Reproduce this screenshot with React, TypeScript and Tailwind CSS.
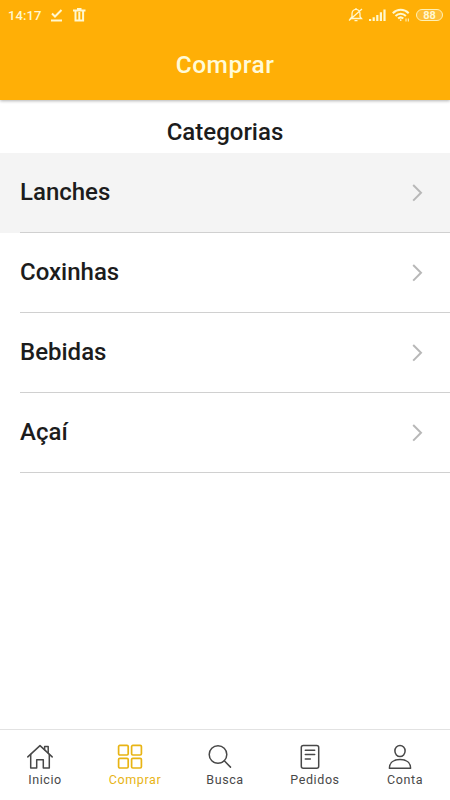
import React, { useState } from 'react';

const CATEGORIES = ['Lanches', 'Coxinhas', 'Bebidas', 'Açaí'];

const HomeIcon: React.FC = () => (
  <svg width="28" height="28" viewBox="0 0 28 28" fill="none" stroke="currentColor" strokeWidth="1.5" strokeLinejoin="round" strokeLinecap="round">
    <path d="M1.8 13.9 14 2.6 26.2 13.9" />
    <path d="M4.7 11.5v13.6h6v-8.4h6.6v8.4h6V11.5" />
    <path d="M18.6 6.7V3.6h3.6v6.3" />
  </svg>
);

const GridIcon: React.FC = () => (
  <svg width="28" height="28" viewBox="0 0 28 28" fill="none" stroke="currentColor" strokeWidth="1.7">
    <rect x="2.6" y="2.4" width="9.6" height="9.6" rx="1.2" />
    <rect x="15.6" y="2.4" width="9.8" height="9.6" rx="1.2" />
    <rect x="2.6" y="15.4" width="9.6" height="9.6" rx="1.2" />
    <rect x="15.6" y="15.4" width="9.8" height="9.6" rx="1.2" />
  </svg>
);

const SearchIcon: React.FC = () => (
  <svg width="28" height="28" viewBox="0 0 28 28" fill="none" stroke="currentColor" strokeWidth="1.5" strokeLinecap="round">
    <circle cx="12" cy="11.5" r="8.8" />
    <path d="m18.3 17.8 6.2 6.3" />
  </svg>
);

const OrdersIcon: React.FC = () => (
  <svg width="28" height="28" viewBox="0 0 28 28" fill="none" stroke="currentColor" strokeWidth="1.5" strokeLinecap="round">
    <rect x="5.3" y="2.5" width="17.4" height="22.8" rx="2" />
    <path d="M9.3 7.2h9.4M9.3 11.6h9.4M9.3 16h5" />
  </svg>
);

const AccountIcon: React.FC = () => (
  <svg width="28" height="28" viewBox="0 0 28 28" fill="none" stroke="currentColor" strokeWidth="1.5" strokeLinejoin="round">
    <ellipse cx="14" cy="8" rx="5.1" ry="5.5" />
    <path d="M3.4 25.2h21.2c0-5.3-4.2-8.6-10.6-8.6S3.4 19.9 3.4 25.2Z" />
  </svg>
);

const TABS = [
  { label: 'Inicio', Icon: HomeIcon },
  { label: 'Comprar', Icon: GridIcon },
  { label: 'Busca', Icon: SearchIcon },
  { label: 'Pedidos', Icon: OrdersIcon },
  { label: 'Conta', Icon: AccountIcon },
];

const StatusBar: React.FC = () => (
  <div className="flex h-[30px] items-center justify-between pl-2 pr-[7px] text-[#fff8d0]">
    <div className="flex items-center">
      <span className="w-[42px] pt-px text-[13px] font-medium tracking-[0.1px]">14:17</span>
      <svg width="14" height="14" viewBox="0 0 14 14" fill="none" stroke="currentColor" strokeWidth="2">
        <path d="m2 5.5 3 3L11.5 2M1 12.5h11" />
      </svg>
      <svg className="ml-[9px]" width="13" height="14" viewBox="0 0 13 14" fill="none" stroke="currentColor" strokeWidth="2">
        <path d="M0 2.5h12.5M4 1h4.5" />
        <path d="M2.5 3v9.5h7.6V3M6.3 4v8" />
      </svg>
    </div>
    <div className="flex items-center">
      {/* Muted bell */}
      <svg width="16" height="16" viewBox="0 0 16 16" fill="none" stroke="currentColor" strokeWidth="1.3">
        <path d="M2.5 11.5h11L12 9.7V7c0-2.7-1.5-4.6-4-4.6S4 4.3 4 7v2.7l-1.5 1.8ZM6.5 13.7h3M8 2.4V1M1 13.5 14 2" />
      </svg>
      <svg className="ml-[5px]" width="17" height="13" viewBox="0 0 17 13" fill="currentColor">
        <path d="M0 10h2.2v2H0zM3.6 8.3h2.2V12H3.6zM7.2 6h2.2v6H7.2zM10.8 3.3H13V12h-2.2zM14.4.5h2.2V12h-2.2z" />
      </svg>
      <svg className="ml-[6px]" width="18" height="16" viewBox="0 0 18 16" fill="none" stroke="currentColor" strokeWidth="2">
        <path d="M.8 6.2c4.5-4.6 11.4-4.6 15.9 0M3.5 9c3-3 7.4-3 10.4 0M6.1 11.6c1.6-1.5 3.6-1.5 5.2 0" />
        <circle cx="8.7" cy="13.1" r=".9" fill="currentColor" stroke="none" />
        <path d="M14 11.5v3M16.3 11.5v3" strokeWidth="1" />
      </svg>
      <span className="ml-[6px] flex h-[12px] w-[27px] items-center justify-center rounded-full border border-[#fff1b5] bg-[#ffbe35] text-[11px] font-bold leading-none">
        88
      </span>
    </div>
  </div>
);

const App: React.FC = () => {
  const [selected, setSelected] = useState('Lanches');
  const [activeTab, setActiveTab] = useState('Comprar');

  return (
    <div className="flex h-screen flex-col bg-white font-[Roboto,sans-serif] text-[#1c1c1c]">
      {/* Header */}
      <header className="z-10 h-[100px] shrink-0 bg-[#ffaf06] shadow-[0_1px_3px_rgba(0,0,0,0.3)]">
        <StatusBar />
        <div className="flex h-[70px] items-center justify-center">
          <h1 className="pt-px text-[24.5px] font-medium tracking-[0.5px] text-[#fffbd8]">Comprar</h1>
        </div>
      </header>

      <main className="flex-1">
        <h2 className="flex h-[53px] items-center justify-center pt-[10px] text-[24px] font-medium">Categorias</h2>
        <ul>
          {CATEGORIES.map(category => (
            <li key={category} className={selected === category ? 'bg-[#f4f4f4]' : 'bg-white'}>
              <button
                className="ml-5 flex h-20 w-[430px] items-center justify-between border-b border-[#d0d0d0] pr-[27px] text-[24px] font-medium"
                onClick={() => setSelected(category)}
              >
                <span className="pb-0.5">{category}</span>
                <svg width="12" height="18" viewBox="0 0 12 18" fill="none" stroke="#b8b8b8" strokeWidth="2">
                  <path d="m2.2 1 7.8 7.8-7.8 7.8" />
                </svg>
              </button>
            </li>
          ))}
        </ul>
      </main>

      {/* Bottom tabs */}
      <nav className="flex h-[71px] shrink-0 border-t border-[#e2e2e2]">
        {TABS.map(({ label, Icon }) => (
          <button
            key={label}
            className={`flex w-[90px] flex-col items-center pt-[13px] ${activeTab === label ? 'text-[#e8b414]' : 'text-[#484848]'}`}
            onClick={() => setActiveTab(label)}
          >
            <span className="mr-[10px]">
              <Icon />
            </span>
            <span className="pt-px text-[12.5px] leading-4 tracking-[0.6px]">{label}</span>
          </button>
        ))}
      </nav>
    </div>
  );
};

export default App;
